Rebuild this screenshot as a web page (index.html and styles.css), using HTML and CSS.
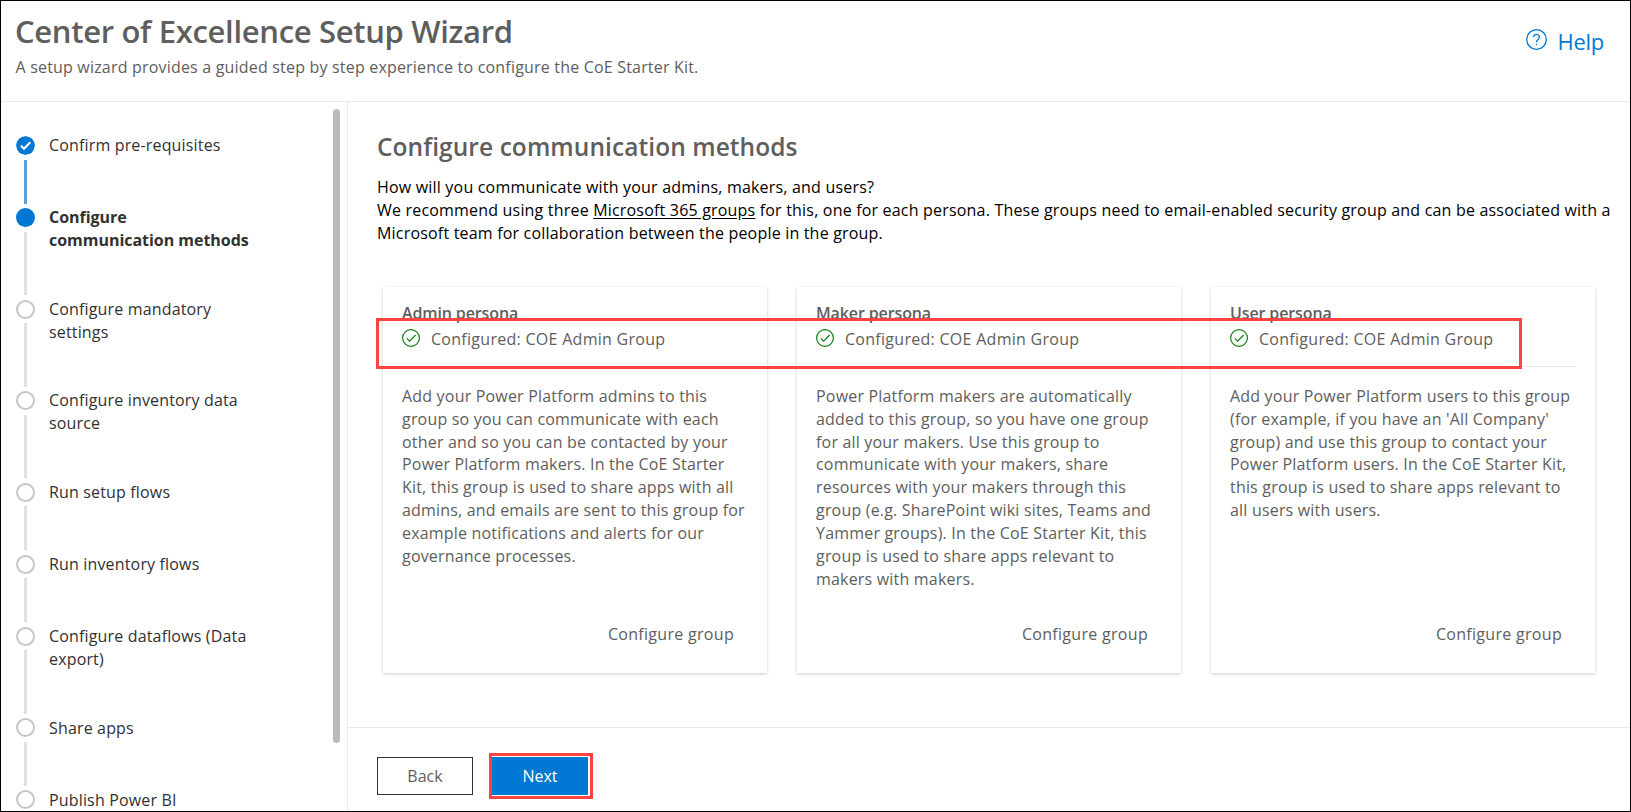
FILE: index.html
```html
<!DOCTYPE html>
<html lang="en">
<head>
<meta charset="utf-8">
<title>Center of Excellence Setup Wizard</title>
<link rel="stylesheet" href="styles.css">
</head>
<body>
<div class="app">
  <header class="header">
    <div>
      <h1 class="title">Center of Excellence Setup Wizard</h1>
      <p class="subtitle">A setup wizard provides a guided step by step experience to configure the CoE Starter Kit.</p>
    </div>
    <a class="help">
      <svg class="help-icon" viewBox="0 0 21 21"><circle cx="10.5" cy="10.5" r="9.8"/><path d="M7.6 8.2C7.6 4.5 13.4 4.5 13.4 8.1C13.4 10.5 10.5 10.4 10.5 13.2M10.5 14.8V16.2"/></svg>
      <span>Help</span>
    </a>
  </header>
  <div class="body">
    <nav class="sidebar">
      <ol class="steps">
        <li class="step done"><span class="rail"><svg class="dot" viewBox="0 0 19 19"><circle cx="9.5" cy="9.5" r="9.5"/><path d="M4.8 9.6L8 12.8L14.3 6.2"/></svg></span><span class="label">Confirm pre-requisites</span></li>
        <li class="step two current"><span class="rail"><span class="dot"></span></span><span class="label">Configure<br>communication methods</span></li>
        <li class="step two"><span class="rail"><span class="dot"></span></span><span class="label">Configure mandatory<br>settings</span></li>
        <li class="step two"><span class="rail"><span class="dot"></span></span><span class="label">Configure inventory data<br>source</span></li>
        <li class="step"><span class="rail"><span class="dot"></span></span><span class="label">Run setup flows</span></li>
        <li class="step"><span class="rail"><span class="dot"></span></span><span class="label">Run inventory flows</span></li>
        <li class="step two"><span class="rail"><span class="dot"></span></span><span class="label">Configure dataflows (Data<br>export)</span></li>
        <li class="step"><span class="rail"><span class="dot"></span></span><span class="label">Share apps</span></li>
        <li class="step"><span class="rail"><span class="dot"></span></span><span class="label">Publish Power BI</span></li>
      </ol>
      <div class="scrollbar"></div>
    </nav>
    <main class="main">
      <section class="content">
        <h2 class="heading">Configure communication methods</h2>
        <p class="intro">How will you communicate with your admins, makers, and users?<br>We recommend using three <a class="link">Microsoft 365 groups</a> for this, one for each persona. These groups need to email-enabled security group and can be associated with a<br>Microsoft team for collaboration between the people in the group.</p>
        <div class="cards">
          <article class="card">
            <h3 class="card-title">Admin persona</h3>
            <div class="status"><svg class="ok" viewBox="0 0 18 18"><circle cx="9" cy="9" r="8.4"/><path d="M4.8 9.3L7.6 12.1L13.6 6"/></svg><span>Configured: COE Admin Group</span></div>
            <p class="desc">Add your Power Platform admins to this<br>group so you can communicate with each<br>other and so you can be contacted by your<br>Power Platform makers. In the CoE Starter<br>Kit, this group is used to share apps with all<br>admins, and emails are sent to this group for<br>example notifications and alerts for our<br>governance processes.</p>
            <a class="action">Configure group</a>
          </article>
          <article class="card">
            <h3 class="card-title">Maker persona</h3>
            <div class="status"><svg class="ok" viewBox="0 0 18 18"><circle cx="9" cy="9" r="8.4"/><path d="M4.8 9.3L7.6 12.1L13.6 6"/></svg><span>Configured: COE Admin Group</span></div>
            <p class="desc">Power Platform makers are automatically<br>added to this group, so you have one group<br>for all your makers. Use this group to<br>communicate with your makers, share<br>resources with your makers through this<br>group (e.g. SharePoint wiki sites, Teams and<br>Yammer groups). In the CoE Starter Kit, this<br>group is used to share apps relevant to<br>makers with makers.</p>
            <a class="action">Configure group</a>
          </article>
          <article class="card">
            <h3 class="card-title">User persona</h3>
            <div class="status"><svg class="ok" viewBox="0 0 18 18"><circle cx="9" cy="9" r="8.4"/><path d="M4.8 9.3L7.6 12.1L13.6 6"/></svg><span>Configured: COE Admin Group</span></div>
            <p class="desc">Add your Power Platform users to this group<br>(for example, if you have an 'All Company'<br>group) and use this group to contact your<br>Power Platform users. In the CoE Starter Kit,<br>this group is used to share apps relevant to<br>all users with users.</p>
            <a class="action">Configure group</a>
          </article>
          <div class="callout"></div>
        </div>
      </section>
      <footer class="footer">
        <button class="btn">Back</button>
        <div class="next-wrap"><button class="btn primary">Next</button><div class="callout-next"></div></div>
      </footer>
    </main>
  </div>
</div>
</body>
</html>
```
FILE: styles.css
```css
* { box-sizing: border-box; margin: 0; padding: 0; }
body {
  font-family: "Open Sans", "Noto Sans", sans-serif;
  font-size: 16px;
  line-height: 22.9px;
  color: #605e5c;
  background: #fff;
}
.app {
  width: 1631px;
  height: 812px;
  border: 1px solid #000;
  display: flex;
  flex-direction: column;
  overflow: hidden;
  white-space: nowrap;
}
.header {
  height: 101px;
  flex: none;
  border-bottom: 1px solid #eaeaea;
  padding: 8px 26px 0 14px;
  display: flex;
  justify-content: space-between;
}
.title { font-size: 31px; line-height: 44px; font-weight: 600; letter-spacing: -0.32px; }
.subtitle { margin-top: 3px; padding-left: 0.5px; letter-spacing: 0.19px; }
.help { display: flex; gap: 11px; color: #0078d4; font-size: 22px; line-height: 30px; padding-top: 17px; letter-spacing: -0.3px; }
.help-icon { width: 21px; height: 21px; margin-top: 3px; fill: none; stroke: #0078d4; stroke-width: 1.3; }
.body { flex: 1; display: flex; min-height: 0; }
.sidebar {
  width: 347px;
  flex: none;
  border-right: 1px solid #eaeaea;
  display: flex;
  justify-content: space-between;
  overflow: hidden;
  padding: 0 7px 0 15px;
}
.steps { list-style: none; padding-top: 34px; }
.step { display: flex; gap: 14px; height: 72px; color: #323130; letter-spacing: 0.16px; }
.step.two { height: 91.6px; }
.rail { display: flex; flex-direction: column; align-items: center; width: 19px; }
.rail::after { content: ""; width: 3px; flex: 1; margin: 4.5px 0; background: #e1e1e1; }
.dot { width: 19px; height: 19px; flex: none; border: 2px solid #c8c6c4; border-radius: 50%; }
.label { margin-top: -1.8px; }
.done .dot { border: 0; fill: #0078d4; }
.done .dot path { fill: none; stroke: #fff; stroke-width: 2; }
.done .rail::after { background: #5fa0cf; }
.current .dot { background: #0078d4; border: 0; }
.current .label { font-weight: 700; letter-spacing: -0.03px; }
.scrollbar { width: 7px; height: 634px; margin-top: 7px; border-radius: 4px; background: #bababa; }
.main { flex: 1; display: flex; flex-direction: column; min-width: 0; }
.content { flex: 1; padding: 25px 0 0 29px; }
.heading { font-size: 24.5px; line-height: 40px; font-weight: 600; letter-spacing: 0.07px; }
.intro { color: #000; margin-top: 9px; letter-spacing: 0.19px; }
.link { text-decoration: underline; text-underline-offset: 2px; }
.cards { position: relative; display: flex; gap: 30px; margin: 42px 0 0 6px; }
.card {
  width: 384px;
  height: 386px;
  padding: 15px 19px 22px;
  display: flex;
  flex-direction: column;
  box-shadow: 0 1.6px 3.6px rgba(0, 0, 0, .14), 0 0 2px rgba(0, 0, 0, .1);
}
.card-title { font-size: 16px; line-height: 23px; font-weight: 600; letter-spacing: -0.12px; }
.status { display: flex; gap: 11px; height: 42px; padding-top: 3px; border-bottom: 1px solid #eaeaea; letter-spacing: 0.28px; }
.ok { width: 18px; height: 18px; margin-top: 1px; fill: none; stroke: #107c10; stroke-width: 1.2; }
.desc { margin-top: 18px; letter-spacing: 0.19px; }
.action { margin: auto 14px 5px auto; letter-spacing: 0.3px; }
.callout { position: absolute; left: -7px; top: 31px; width: 1146px; height: 51px; border: 3px solid #ff4343; }
.footer { height: 84px; flex: none; border-top: 1px solid #eaeaea; padding: 29px 0 0 29px; display: flex; gap: 19px; }
.btn { width: 96px; height: 38px; font: inherit; color: #605e5c; background: #fff; border: 1px solid #323130; }
.btn.primary { background: #0078d4; border-color: #0078d4; color: #fff; }
.next-wrap { position: relative; }
.callout-next { position: absolute; left: -3px; top: -4px; width: 104px; height: 46px; border: 3px solid #ff4343; }
```
